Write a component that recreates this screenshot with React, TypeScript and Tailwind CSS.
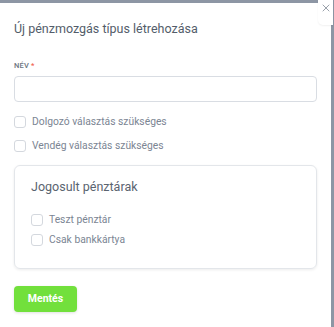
import { X } from "lucide-react";

const Checkbox = ({ label }: { label: string }) => (
  <label className="flex items-center gap-[6px] h-[14px]">
    <span className="w-[12px] h-[12px] rounded-[3px] border border-[#d4d8de] bg-white" />
    <span className="text-[10.3px] leading-[14px] text-[#7b8593]">{label}</span>
  </label>
);

export default function App() {
  return (
    <div
      className="relative w-[334px] h-[327px] bg-[#8d96a4] pt-[3px] pr-[2px] overflow-hidden"
      style={{ fontFamily: "Roboto, 'Open Sans', sans-serif" }}
    >
      <div className="w-[331px] h-full bg-white px-[14px] pt-[18px]">
        <h2 className="text-[12.5px] leading-[16px] text-[#535d6a]">Új pénzmozgás típus létrehozása</h2>

        <div className="mt-[24px] text-[7.5px] leading-[10px] font-medium uppercase text-[#6b7480] tracking-[0.2px]">
          Név <span className="text-[#f0604d]">*</span>
        </div>
        <div className="mt-[5px] h-[26px] rounded-[4px] border border-[#d9dde3]" />

        <div className="mt-[13px] flex flex-col gap-[10px]">
          <Checkbox label="Dolgozó választás szükséges" />
          <Checkbox label="Vendég választás szükséges" />
        </div>

        <div className="mt-[12px] h-[104px] rounded-[6px] border border-[#e3e6ea] shadow-[0_1px_3px_rgba(0,0,0,0.08)] px-[16px] pt-[13px]">
          <h3 className="text-[12.5px] leading-[16px] text-[#5a6470]">Jogosult pénztárak</h3>
          <div className="mt-[18px] flex flex-col gap-[6px]">
            <Checkbox label="Teszt pénztár" />
            <Checkbox label="Csak bankkártya" />
          </div>
        </div>

        <button className="mt-[17px] w-[63px] h-[26px] rounded-[4px] bg-[#72e03c] text-white text-[10.5px] leading-[26px] font-bold shadow-[0_1px_3px_rgba(0,0,0,0.12)]">
          Mentés
        </button>
      </div>

      <div className="absolute top-0 left-[318px] w-[15px] h-[25px] bg-white rounded-bl-[5px] flex items-start justify-end pt-[2px] pr-[1px] shadow-[0_1px_2px_rgba(0,0,0,0.06)]">
        <X size={12} strokeWidth={2} className="text-[#9aa1ab]" />
      </div>
    </div>
  );
}
